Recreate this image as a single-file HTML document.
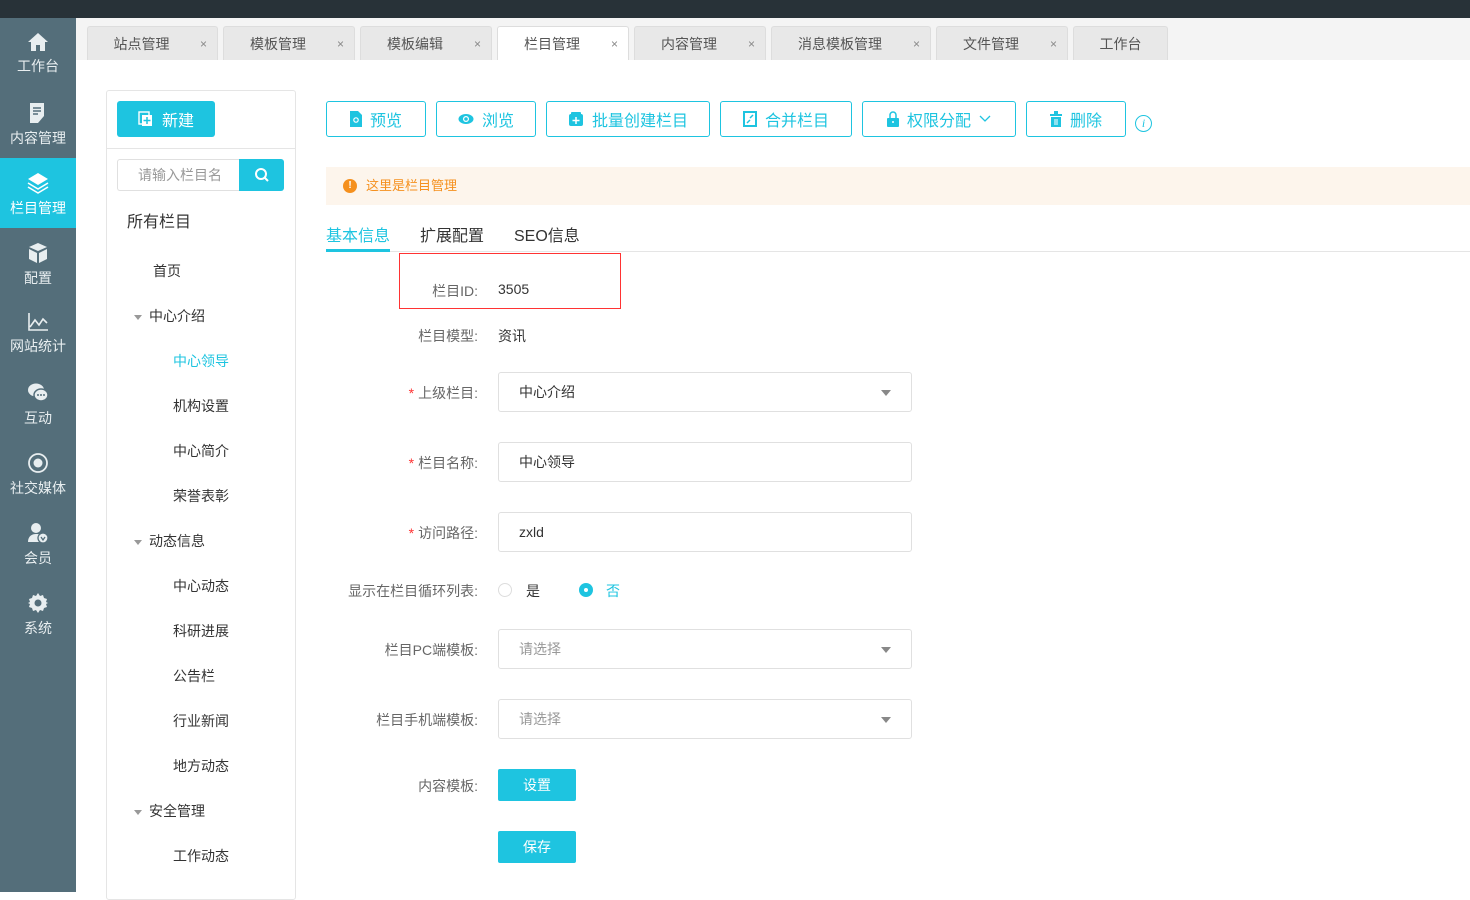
<!DOCTYPE html>
<html><head><meta charset="utf-8"><style>
*{margin:0;padding:0;box-sizing:border-box}
body{width:1470px;height:892px;overflow:hidden;background:#fff;font-family:"Liberation Sans","Noto Sans CJK SC",sans-serif;font-size:14px;color:#333;position:relative}
.a{position:absolute}
.top{left:0;top:0;width:1470px;height:18px;background:#283238}
.side{left:0;top:18px;width:76px;height:874px;background:#546e7a}
.si{position:absolute;left:0;width:76px;height:70px;color:#e8eef0;text-align:center;font-size:14px}
.si svg{display:block;margin:14px auto 4px}
.si.on{background:#1ec4e0;color:#fff}
.tabbar{left:76px;top:18px;width:1394px;height:42px;background:#f4f4f4}
.tab{position:absolute;top:26px;height:34px;background:#e8e8e8;border:1px solid #ddd;border-bottom:none;border-radius:3px 3px 0 0;color:#555;font-size:14px;line-height:34px}
.tab .t{position:absolute;left:0;right:22px;text-align:center}
.tab .x{position:absolute;right:10px;color:#888;font-size:12px}
.tab.on{background:#fff}
.panel{left:106px;top:90px;width:190px;height:810px;border:1px solid #e5e5e5;border-radius:3px}
.btn{position:absolute;border:1px solid #1ec4e0;border-radius:3px;color:#1ec4e0;font-size:16px;height:36px;top:101px;display:flex;align-items:center;justify-content:center;gap:8px;background:#fff}
.tr{position:absolute;font-size:14px;color:#333}
.ar{display:inline-block;width:0;height:0;border-left:4px solid transparent;border-right:4px solid transparent;border-top:5px solid #999;margin-right:7px;vertical-align:middle}
.lbl{position:absolute;right:992px;font-size:14px;color:#666;text-align:right;white-space:nowrap}
.in{position:absolute;left:498px;width:414px;height:40px;border:1px solid #e0e0e0;border-radius:3px;padding-left:20px;line-height:38px;font-size:14px}
.car{position:absolute;right:20px;top:17px;width:0;height:0;border-left:5px solid transparent;border-right:5px solid transparent;border-top:6px solid #888}
.pb{position:absolute;left:498px;width:78px;height:32px;background:#1ec4e0;color:#fff;text-align:center;line-height:32px;border-radius:2px}
.star{color:#f33;margin-right:4px}
</style></head><body>
<div class="a top"></div>
<div class="a side">
 <div class="si" style="top:0"><svg width="22" height="20" viewBox="0 0 22 20"><path d="M11 1L1 10h3v9h5v-6h4v6h5v-9h3z" fill="#e8eef0"/></svg>工作台</div>
 <div class="si" style="top:70px"><svg width="20" height="22" viewBox="0 0 20 22"><path d="M2 1h14v13l-6 7H2z" fill="#e8eef0"/><path d="M5 6h8M5 9h8M5 12h5" stroke="#546e7a" stroke-width="1.6"/></svg>内容管理</div>
 <div class="si on" style="top:140px"><svg width="22" height="22" viewBox="0 0 22 22"><path d="M11 1l10 6-10 6-10-6z" fill="#fff"/><path d="M1 11l10 6 10-6M1 15l10 6 10-6" stroke="#fff" stroke-width="1.6" fill="none"/></svg>栏目管理</div>
 <div class="si" style="top:210px"><svg width="22" height="22" viewBox="0 0 22 22"><path d="M11 1l9 4-9 4-9-4zM2 7l8 4v10l-8-4zM20 7l-8 4v10l8-4z" fill="#e8eef0"/></svg>配置</div>
 <div class="si" style="top:280px"><svg width="22" height="20" viewBox="0 0 22 20"><path d="M2 1v17h19M3 15l5-7 4 5 4-6 4 4" stroke="#e8eef0" stroke-width="1.6" fill="none"/></svg>网站统计</div>
 <div class="si" style="top:350px"><svg width="22" height="22" viewBox="0 0 22 22"><ellipse cx="9" cy="8" rx="8" ry="6.5" fill="#e8eef0"/><ellipse cx="14" cy="13" rx="7" ry="6" fill="#e8eef0" stroke="#546e7a" stroke-width="1.5"/><circle cx="11" cy="13" r="1" fill="#546e7a"/><circle cx="14" cy="13" r="1" fill="#546e7a"/><circle cx="17" cy="13" r="1" fill="#546e7a"/></svg>互动</div>
 <div class="si" style="top:420px"><svg width="22" height="22" viewBox="0 0 22 22"><circle cx="11" cy="11" r="9" stroke="#e8eef0" stroke-width="1.8" fill="none"/><circle cx="11" cy="11" r="4.5" fill="#e8eef0"/></svg>社交媒体</div>
 <div class="si" style="top:490px"><svg width="22" height="22" viewBox="0 0 22 22"><circle cx="9" cy="6" r="5" fill="#e8eef0"/><path d="M1 20c0-6 4-8 8-8s6 1 7 3v5z" fill="#e8eef0"/><circle cx="16" cy="16" r="5" fill="#e8eef0" stroke="#546e7a" stroke-width="1.3"/><path d="M14 15l2 3 2-3" stroke="#546e7a" stroke-width="1.3" fill="none"/></svg>会员</div>
 <div class="si" style="top:560px"><svg width="22" height="22" viewBox="0 0 22 22"><path d="M11 1l2 3 3-1 1 3 3 1-1 3 2 1-2 1 1 3-3 1-1 3-3-1-2 3-2-3-3 1-1-3-3-1 1-3-2-1 2-1-1-3 3-1 1-3 3 1z" fill="#e8eef0"/><circle cx="11" cy="11" r="3.5" fill="#546e7a"/></svg>系统</div>
</div>
<div class="a tabbar"></div>
<div class="tab" style="left:87px;width:131px"><span class="t">站点管理</span><span class="x">×</span></div>
<div class="tab" style="left:223px;width:132px"><span class="t">模板管理</span><span class="x">×</span></div>
<div class="tab" style="left:360px;width:132px"><span class="t">模板编辑</span><span class="x">×</span></div>
<div class="tab on" style="left:497px;width:132px"><span class="t">栏目管理</span><span class="x">×</span></div>
<div class="tab" style="left:634px;width:132px"><span class="t">内容管理</span><span class="x">×</span></div>
<div class="tab" style="left:771px;width:160px"><span class="t">消息模板管理</span><span class="x">×</span></div>
<div class="tab" style="left:936px;width:132px"><span class="t">文件管理</span><span class="x">×</span></div>
<div class="tab" style="left:1073px;width:95px"><span class="t" style="right:0">工作台</span></div>

<div class="a panel"></div>
<div class="a" style="left:117px;top:101px;width:98px;height:36px;background:#1ec4e0;border-radius:3px;color:#fff;font-size:16px;display:flex;align-items:center;justify-content:center;gap:8px"><svg width="16" height="16" viewBox="0 0 16 16"><rect x="1" y="1" width="10" height="12" fill="none" stroke="#fff" stroke-width="1.4"/><rect x="4" y="4" width="10" height="11" fill="#fff"/><path d="M9 6v7M5.5 9.5h7" stroke="#1ec4e0" stroke-width="1.5"/></svg>新建</div>
<div class="a" style="left:107px;top:148px;width:188px;height:1px;background:#e5e5e5"></div>
<div class="a" style="left:117px;top:159px;width:123px;height:32px;border:1px solid #e0e0e0;border-right:none;border-radius:3px 0 0 3px;color:#999;line-height:30px;padding-left:20px;font-size:14px">请输入栏目名</div>
<div class="a" style="left:239px;top:159px;width:45px;height:32px;background:#1ec4e0;border-radius:0 3px 3px 0"><svg width="45" height="32" viewBox="0 0 45 32"><circle cx="22" cy="15" r="5" stroke="#fff" stroke-width="2" fill="none"/><path d="M25.5 18.5l3.5 3.5" stroke="#fff" stroke-width="2"/></svg></div>
<div class="tr" style="left:127px;top:208px;font-size:16px">所有栏目</div>
<div class="tr" style="left:153px;top:261px">首页</div>
<div class="tr" style="left:134px;top:306px"><span class="ar"></span>中心介绍</div>
<div class="tr" style="left:173px;top:351px;color:#1ec4e0">中心领导</div>
<div class="tr" style="left:173px;top:396px">机构设置</div>
<div class="tr" style="left:173px;top:441px">中心简介</div>
<div class="tr" style="left:173px;top:486px">荣誉表彰</div>
<div class="tr" style="left:134px;top:531px"><span class="ar"></span>动态信息</div>
<div class="tr" style="left:173px;top:576px">中心动态</div>
<div class="tr" style="left:173px;top:621px">科研进展</div>
<div class="tr" style="left:173px;top:666px">公告栏</div>
<div class="tr" style="left:173px;top:711px">行业新闻</div>
<div class="tr" style="left:173px;top:756px">地方动态</div>
<div class="tr" style="left:134px;top:801px"><span class="ar"></span>安全管理</div>
<div class="tr" style="left:173px;top:846px">工作动态</div>

<div class="btn" style="left:326px;width:100px"><svg width="12" height="16" viewBox="0 0 12 16"><path d="M0 0h8l4 4v12H0z" fill="#1ec4e0"/><circle cx="6" cy="9" r="2.2" stroke="#fff" stroke-width="1.2" fill="none"/></svg>预览</div>
<div class="btn" style="left:436px;width:100px"><svg width="16" height="12" viewBox="0 0 16 12"><ellipse cx="8" cy="6" rx="7.5" ry="5" fill="#1ec4e0"/><circle cx="8" cy="6" r="3" fill="#fff"/><circle cx="8" cy="6" r="1.8" fill="#1ec4e0"/></svg>浏览</div>
<div class="btn" style="left:546px;width:164px"><svg width="16" height="16" viewBox="0 0 16 16"><rect x="1" y="3" width="14" height="12" rx="2" fill="#1ec4e0"/><rect x="3" y="1" width="10" height="3" rx="1" fill="#1ec4e0"/><path d="M8 6v7M4.5 9.5h7" stroke="#fff" stroke-width="1.5"/></svg>批量创建栏目</div>
<div class="btn" style="left:720px;width:132px"><svg width="14" height="16" viewBox="0 0 14 16"><rect x="0" y="0" width="14" height="16" fill="#1ec4e0"/><rect x="2" y="2" width="10" height="12" fill="#fff"/><path d="M4 12l3-3M10 4L7 7" stroke="#1ec4e0" stroke-width="1.5"/></svg>合并栏目</div>
<div class="btn" style="left:862px;width:154px"><svg width="12" height="16" viewBox="0 0 12 16"><path d="M3 7V4a3 3 0 016 0v3" stroke="#1ec4e0" stroke-width="1.5" fill="none"/><rect x="0" y="7" width="12" height="9" rx="1" fill="#1ec4e0"/><circle cx="6" cy="11" r="1" fill="#fff"/></svg>权限分配<svg width="12" height="8" viewBox="0 0 12 8"><path d="M1 1l5 5 5-5" stroke="#1ec4e0" stroke-width="1.3" fill="none"/></svg></div>
<div class="btn" style="left:1026px;width:100px"><svg width="12" height="16" viewBox="0 0 12 16"><rect x="0" y="3" width="12" height="2" fill="#1ec4e0"/><rect x="4" y="0" width="4" height="3" fill="#1ec4e0"/><rect x="1" y="6" width="10" height="10" fill="#1ec4e0"/><path d="M5 8v6M7 8v6" stroke="#fff"/></svg>删除</div>
<div class="a" style="left:1135px;top:115px;width:17px;height:17px;border:1px solid #1ec4e0;border-radius:50%;color:#1ec4e0;font:italic 12px 'Liberation Serif',serif;text-align:center;line-height:15px">i</div>

<div class="a" style="left:326px;top:167px;width:1144px;height:38px;background:#fdf5ec;color:#f5901e;font-size:13px;line-height:38px;padding-left:40px">这里是栏目管理</div>
<div class="a" style="left:343px;top:179px;width:14px;height:14px;border-radius:50%;background:#f5901e;color:#fff;font-size:10px;font-weight:bold;text-align:center;line-height:14px">!</div>

<div class="a" style="left:326px;top:251px;width:1144px;height:1px;background:#e5e5e5"></div>
<div class="a" style="left:326px;top:249px;width:64px;height:3px;background:#1ec4e0"></div>
<div class="a" style="left:326px;top:222px;font-size:16px;color:#1ec4e0">基本信息</div>
<div class="a" style="left:420px;top:222px;font-size:16px;color:#333">扩展配置</div>
<div class="a" style="left:514px;top:222px;font-size:16px;color:#333">SEO信息</div>

<div class="a" style="left:399px;top:253px;width:222px;height:56px;border:1px solid #f33"></div>
<div class="lbl" style="top:281px">栏目ID:</div><div class="a" style="left:498px;top:281px">3505</div>
<div class="lbl" style="top:326px">栏目模型:</div><div class="a" style="left:498px;top:326px">资讯</div>
<div class="lbl" style="top:383px"><span class="star">*</span>上级栏目:</div>
<div class="in" style="top:372px">中心介绍<span class="car"></span></div>
<div class="lbl" style="top:453px"><span class="star">*</span>栏目名称:</div>
<div class="in" style="top:442px">中心领导</div>
<div class="lbl" style="top:523px"><span class="star">*</span>访问路径:</div>
<div class="in" style="top:512px">zxld</div>
<div class="lbl" style="top:581px">显示在栏目循环列表:</div>
<div class="a" style="left:498px;top:583px;width:14px;height:14px;border:1px solid #ddd;border-radius:50%"></div>
<div class="a" style="left:526px;top:581px">是</div>
<div class="a" style="left:579px;top:583px;width:14px;height:14px;border-radius:50%;background:#1ec4e0"><div style="width:4px;height:4px;background:#fff;border-radius:50%;margin:5px"></div></div>
<div class="a" style="left:606px;top:581px;color:#1ec4e0">否</div>
<div class="lbl" style="top:640px">栏目PC端模板:</div>
<div class="in" style="top:629px;color:#999">请选择<span class="car"></span></div>
<div class="lbl" style="top:710px">栏目手机端模板:</div>
<div class="in" style="top:699px;color:#999">请选择<span class="car"></span></div>
<div class="lbl" style="top:776px">内容模板:</div>
<div class="pb" style="top:769px">设置</div>
<div class="pb" style="top:831px">保存</div>
</body></html>
